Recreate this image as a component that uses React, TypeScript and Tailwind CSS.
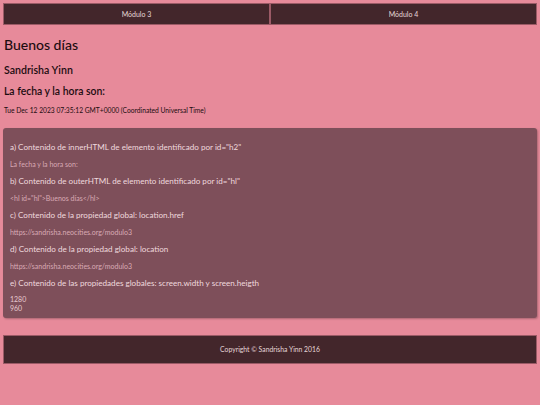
import React from "react";

export default function App() {
  const items: { q: string; a: string[] }[] = [
    { q: 'a) Contenido de innerHTML de elemento identificado por id="h2"', a: ["La fecha y la hora son:"] },
    { q: 'b) Contenido de outerHTML de elemento identificado por id="hl"', a: ['<hl id="hl">Buenos días</hl>'] },
    { q: "c) Contenido de la propiedad global: location.href", a: ["https://sandrisha.neocities.org/modulo3"] },
    { q: "d) Contenido de la propiedad global: location", a: ["https://sandrisha.neocities.org/modulo3"] },
  ];
  return (
    <div className="min-h-screen bg-[#e78a9a] px-[3px] pt-[3px] pb-[3px] font-['Lato','Open_Sans',sans-serif] text-[#1c0c10]">
      <nav className="flex h-[22px]">
        <div className="flex-1 flex items-center justify-center bg-[#43262b] border border-[#9b5a66] text-[7px] text-[#e6d6d8]">Módulo 3</div>
        <div className="flex-1 flex items-center justify-center bg-[#43262b] border border-[#9b5a66] text-[7px] text-[#e6d6d8]">Módulo 4</div>
      </nav>
      <h1 className="mt-[10px] h-[20px] leading-[20px] text-[14px] font-medium pl-[1px]">Buenos días</h1>
      <h2 className="mt-[7px] h-[16px] leading-[16px] text-[10.6px] font-semibold pl-[1px]">Sandrisha Yinn</h2>
      <h3 className="mt-[5px] h-[16px] leading-[16px] text-[10.4px] font-semibold pl-[1px]">La fecha y la hora son:</h3>
      <p className="mt-[6px] h-[10px] leading-[10px] text-[6.7px] pl-[1px]">Tue Dec 12 2023 07:35:12 GMT+0000 (Coordinated Universal Time)</p>
      <section className="mt-[13px] rounded-[3px] bg-[#7e4f5a] shadow-[1px_1px_2px_rgba(0,0,0,0.25)] px-[7px] pt-[13px] pb-[5px]">
        {items.map((it, i) => (
          <div key={i} className={i === 0 ? "" : "mt-[5px]"}>
            <div className="h-[12px] leading-[12px] text-[8.1px] text-[#efd9de]">{it.q}</div>
            <div className="mt-[5px] h-[12px] leading-[12px] text-[7px] text-[#d9aab5]">{it.a[0]}</div>
          </div>
        ))}
        <div className="mt-[5px] h-[12px] leading-[12px] text-[8.1px] text-[#efd9de]">e) Contenido de las propiedades globales: screen.width y screen.heigth</div>
        <div className="mt-[6px] h-[9px] leading-[9px] text-[7px] text-[#e6c8cf]">1280</div>
        <div className="h-[9px] leading-[9px] text-[7px] text-[#e6c8cf]">960</div>
      </section>
      <footer className="mt-[17px] h-[29px] flex items-center justify-center bg-[#43262b] border border-[#9b5a66] text-[6.8px] text-[#e6d6d8]">
        Copyright © Sandrisha Yinn 2016
      </footer>
    </div>
  );
}
